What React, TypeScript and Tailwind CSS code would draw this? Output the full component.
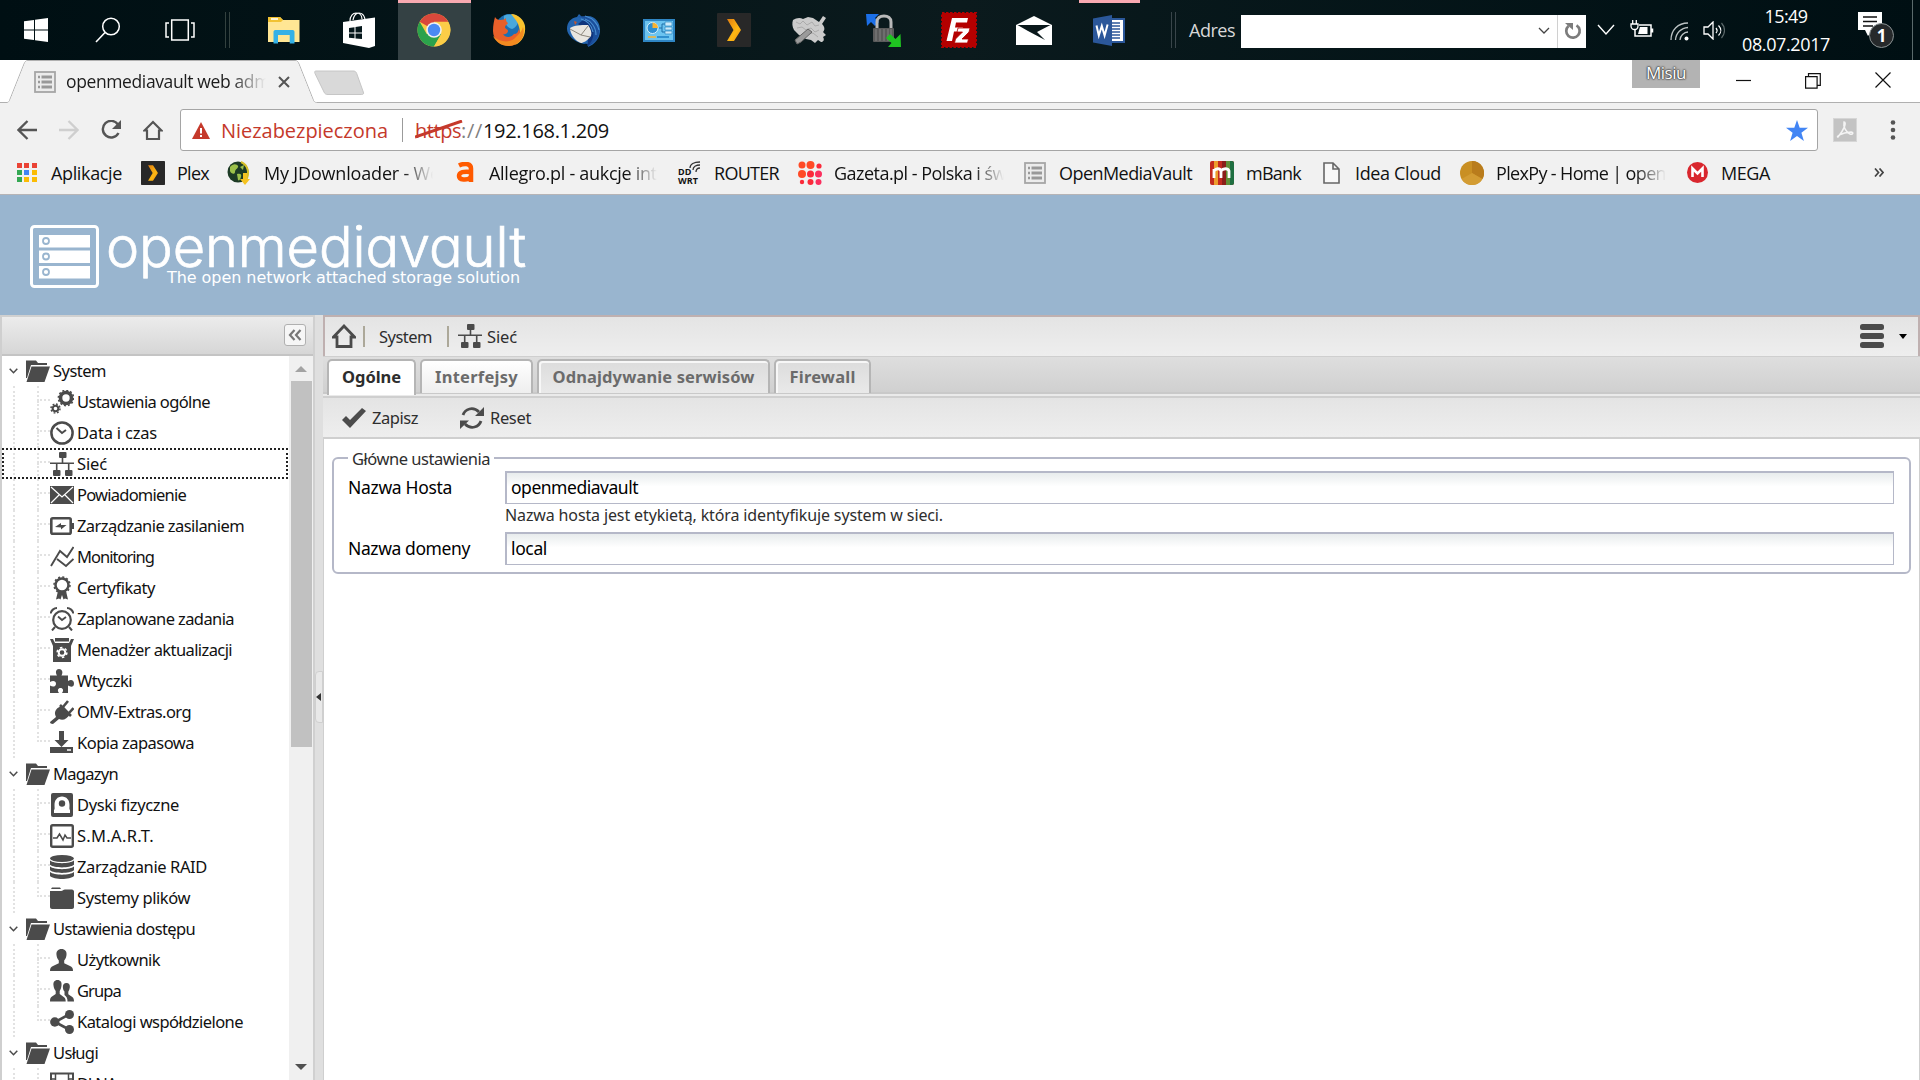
import React, { useLayoutEffect, useRef, useState } from "react";

const ui = "font-['Open_Sans','Noto_Sans',sans-serif]";
const tahoma = "font-['Noto_Sans',sans-serif]";

/* One line of text whose tracking is adjusted so that it fills a given width. */
function Fit({ w, className = "", children }: { w: number; className?: string; children: string }) {
  const ref = useRef<HTMLSpanElement>(null);
  const [spacing, setSpacing] = useState(0);
  useLayoutEffect(() => {
    const el = ref.current;
    if (!el) return;
    setSpacing((w - el.getBoundingClientRect().width) / children.length);
  }, [w, children]);
  return (
    <span className={`inline-block shrink-0 whitespace-nowrap ${className}`} style={{ width: w }}>
      <span ref={ref} style={{ letterSpacing: spacing }}>{children}</span>
    </span>
  );
}

type SvgProps = { w: number; h: number; className?: string; box?: string; children: React.ReactNode };
function Svg({ w, h, className = "", box, children }: SvgProps) {
  return (
    <svg width={w} height={h} viewBox={box ?? `0 0 ${w} ${h}`} className={`shrink-0 ${className}`} fill="none">
      {children}
    </svg>
  );
}

const G = "#4b4b4b";

/* ---------- Taskbar ---------- */
function PlexIcon({ size, className = "" }: { size: number; className?: string }) {
  return (
    <Svg w={size} h={size} box="0 0 34 34" className={className}>
      <defs>
        <linearGradient id="plexg" x1="0" y1="0" x2="1" y2="1">
          <stop offset="0" stopColor="#e07d10" /><stop offset="0.6" stopColor="#fdb813" /><stop offset="1" stopColor="#f08a10" />
        </linearGradient>
      </defs>
      <rect width="34" height="34" rx="1" fill="#282828" />
      <path d="M10 6h7l7 11-7 11h-7l6.500-11z" fill="url(#plexg)" />
    </Svg>
  );
}

function Taskbar() {
  return (
    <div className={`flex h-[60px] w-full items-center bg-linear-to-r from-[#000f13] via-[#0b1a1d] to-[#000f13] text-white ${ui}`}>
      <Svg w={24} h={24} className="ml-[24px]">
        <path fill="#fff" d="M0 3.300l10-1.400v9.600H0zM11 1.800L24 0v11.500H11zM0 12.500h10v9.600L0 20.700zM11 12.500h13V24l-13-1.800z" />
      </Svg>
      <Svg w={26} h={26} className="ml-[47px]">
        <circle cx="16" cy="9.500" r="8.300" stroke="#fff" strokeWidth="1.500" />
        <path d="M10 15.500L1 25" stroke="#fff" strokeWidth="1.600" />
      </Svg>
      <Svg w={30} h={22} className="ml-[44px]">
        <path d="M6.700 1h16.600v20H6.700zM4 4H1v14h3M26 4h3v14h-3" stroke="#fff" strokeWidth="1.500" />
      </Svg>
      <div className="ml-[30px] h-9 w-[5px] border-x border-[#33413f]" />
      <Svg w={32} h={27} className="ml-[38px]">
        <path d="M0 0h12l3 3h16.500v22H0z" fill="#ffe694" />
        <path d="M0 0h12l3 3-2 2H0z" fill="#f1c232" />
        <path d="M3 2h7" stroke="#fff" strokeWidth="1.600" />
        <path d="M5.500 26.500V15c0-1 .5-2 1.800-2h17.400c1.200 0 1.800 1 1.800 2v11.500h-4.800V18H10v8.500z" fill="#35b1e6" />
      </Svg>
      <Svg w={32} h={36} className="ml-[43px]">
        <path d="M0 10l32-4.500V34l-6 2L0 31z" fill="#fff" />
        <path d="M7 9c0-5 3-8 6-8s6 2 6 6M10 8c1-5 3-7 6-7s5 2 6 6" stroke="#fff" strokeWidth="1.200" />
        <path d="M6 16l5.500-.8v5.300H6zM12.500 15l6.500-1v6.500h-6.500zM6 21.500h5.500v4.800L6 25.700zM12.500 21.500H19V27l-6.500-.6z" fill="#06181c" />
      </Svg>
      <div className="ml-[23px] flex h-full w-[73px] items-center border-t-3 border-[#f9a9b1] bg-[#344144] pb-[3px] pl-[19px]">
        <Chrome />
      </div>
      <Svg w={34} h={34} className="ml-[21px]">
        <circle cx="18" cy="16" r="15" fill="#1b6fb4" />
        <path d="M12 3c4-3 11-1 14 3 1 4-2 9-6 10-5-1-9-7-8-13z" fill="#49a8dc" />
        <path d="M19 1c7 0 13 6 14 12 1 9-3 16-10 19 4-5 6-12 4-18-1-5-4-8-8-13z" fill="#f9c22d" />
        <path d="M3 4c1 2 3 3 5 3 3 0 5-1 6-2 0 2 0 4 2 5 0 1-3 2-3 4s3 2 3 4-3 4-5 3c2 4 8 4 11 0 3 0 4-2 5-5 4 9-2 17-10 17C9 33 1 27 1 18c0-6 1-10 2-14z" fill="#e8602a" />
        <path d="M31 14c3 9-3 18-14 19-8 0-13-4-16-10 6 6 17 8 23 1 4-4 6-6 7-10z" fill="#f28a20" />
      </Svg>
      <Svg w={34} h={34} className="ml-[41px]">
        <path d="M12 1l3 3C26 0 34 8 33 19c-1 7-5 12-12 15 1-3-1-4-4-3C7 29 0 22 0 16c0-7 4-11 10-12z" fill="#2364ae" />
        <path d="M20 4c9 3 13 13 9 21-2 4-5 7-9 8 3-9-1-16-9-22z" fill="#10357c" />
        <path d="M3 15c5-3 10-3 18-3 3 4 4 8 3 11-4 5-8 7-10 7C8 28 3 21 3 15z" fill="#e9e6e0" />
        <path d="M3 16l11 6 7-9M14 22l9 2" stroke="#8d877c" />
        <path d="M10 4c8 0 14 4 16 12 1 6 0 11-4 16 7-3 11-9 10-16C31 8 22 1 10 4z" fill="#1b4f9c" />
        <path d="M18 3c8 2 13 8 14 14M18 6c6 2 11 8 11 16M14 6c8 2 11 8 12 13" stroke="#4a8fd0" strokeWidth="1.100" />
        <path d="M7 8l3 1-2 3z" fill="#c9542b" />
      </Svg>
      <Svg w={32} h={23} className="ml-[42px]">
        <rect x="1" y="1" width="30" height="21" fill="#6cc4f0" stroke="#2f86c4" strokeWidth="2" />
        <circle cx="9.500" cy="9" r="5.500" fill="#2d8fd2" stroke="#d8f1fc" />
        <path d="M9.500 9V3.500A5.500 5.500 0 0115 9z" fill="#f8b332" />
        <path d="M16 9h3V5h3M19 9v4h3" stroke="#1c6fa8" />
        <path d="M22 3h7v4h-7zM22 8h7v3h-7zM22 12h7v3h-7z" fill="#cbeafa" stroke="#2d86c0" strokeWidth=".7" />
        <path d="M5 18h8" stroke="#f8b332" strokeWidth="1.500" /><path d="M14 18h12" stroke="#1c7fc4" strokeWidth="1.500" />
      </Svg>
      <PlexIcon size={34} className="ml-[42px]" />
      <Svg w={35} h={30} className="ml-[41px]">
        <path d="M1 5c3-2 7-3 10-1l5-2 5 1 6 4 4-6 3 2-4 6c3 3 3 6 1 8l3 3-3 2c2 3 0 5-2 5l-3-2-3 3-4-3-5-1-7-4-5-5c-2-4-2-7-1-10z" fill="#cbcbcb" />
        <path d="M4 7l4 2 3-3 4 4 5-3 3 4 4-1M5 13l5-1 4 3 5-2 4 4 4-2M12 18l5 1 4-1 5 4" stroke="#ababab" />
        <path d="M3 25l13-11 4 3L9 27l-4 2z" fill="#9b9b9b" stroke="#666" />
      </Svg>
      <Svg w={35} h={35} className="ml-[39px]">
        <path d="M0 1h13l-4 4 4 4-4 4-4-4-4 4z" fill="#1b6fe8" />
        <path d="M11 15V9c0-4 3-6 7-6s7 2 7 6v6" stroke="#b9b9b9" strokeWidth="3" />
        <rect x="7" y="15" width="21" height="14" rx="1" fill="#5b5b5b" />
        <path d="M10 16v12M14 16v12M18 16v12M22 16v12M25 16v12" stroke="#828282" />
        <path d="M35 34H22l3.500-4L20 25l4-4 5.500 5 5-5z" fill="#1fc321" />
      </Svg>
      <Svg w={36} h={36} className="ml-[40px]">
        <rect x="1" y="1" width="34" height="34" fill="#b40000" stroke="#b40000" strokeWidth="2" strokeDasharray="2.500 1.500" />
        <path d="M11 6h16l-1 4.500H15l-1 5h8l-1 4h-8L11 29H5.500z" fill="#fff" />
        <path d="M17 16h12l-1 4-7 7h6.500l-1 4H13.500l1-4 7-7H16z" fill="#fff" stroke="#b40000" strokeWidth=".8" />
      </Svg>
      <Svg w={36} h={29} className="ml-[39px]">
        <path d="M0 9L18 0l18 9v20H0z" fill="#fff" /><path d="M1.500 9h33L21 16l8 8-17-9z" fill="#0a181b" />
      </Svg>
      <div className="ml-[27px] flex h-full w-[61px] items-center border-t-3 border-[#f9a9b1] pb-[3px] pl-[14px]">
        <Svg w={32} h={31}>
          <rect x="17" y="3" width="15" height="25" fill="#2b579a" /><rect x="18" y="5" width="12" height="21" fill="#fff" />
          <path d="M18 8h9M18 11h9M18 14h9M18 17h9M18 20h9M18 23h9" stroke="#2b579a" strokeWidth="1.400" />
          <path d="M0 3.500L19 0v31L0 27.500z" fill="#2b579a" />
          <path d="M3.500 10.500l2.300 10 3-9.500 2.800 9.500 3-11" stroke="#fff" strokeWidth="2" />
        </Svg>
      </div>
      <div className="ml-[31px] h-9 w-[5px] border-x border-[#39454a]" />
      <Fit w={46} className="ml-[13px] text-[18px] text-[#d8d8d8]">Adres</Fit>
      <div className="ml-[6px] mt-[2px] flex h-[33px] w-[345px] items-center bg-white">
        <Svg w={12} h={8} className="ml-[297px]"><path d="M1 1l5 5 5-5" stroke="#444" strokeWidth="1.300" /></Svg>
        <div className="ml-[7px] h-full w-px bg-[#d0d0d0]" />
        <Svg w={18} h={18} className="ml-[6px]">
          <path d="M12.500 3.300A6.700 6.700 0 114.500 4" stroke="#7c7c7c" strokeWidth="2.700" /><path d="M1 1h8v7z" fill="#7c7c7c" />
        </Svg>
      </div>
      <Svg w={18} h={12} className="ml-[11px]"><path d="M1 1l8 9 8-9" stroke="#fff" strokeWidth="1.400" /></Svg>
      <Svg w={24} h={18} className="ml-[15px] -mt-[2px]">
        <path d="M9 5h12v11H5V10M22.500 8.500v4" stroke="#fff" strokeWidth="1.500" /><path d="M10 7h7.500v7H8z" fill="#fff" />
        <path d="M1 4h7v2c0 2-1.500 3.500-3.500 3.500S1 8 1 6zM2.700 0v4M6.300 0v4" stroke="#fff" strokeWidth="1.300" />
      </Svg>
      <Svg w={19} h={19} className="ml-[16px] mt-[2px]">
        <path d="M1 18C1 8 8 1 18 1M5.500 18C6 11 11 6 18 5.500M10 18c0-4 4-8 8-8" stroke="#bcc3c4" strokeWidth="1.300" /><circle cx="16.500" cy="16.500" r="2" fill="#fff" />
      </Svg>
      <Svg w={22} h={19} className="ml-[14px]">
        <path d="M1 6h4l5-5v17l-5-5H1z" stroke="#fff" strokeWidth="1.300" /><path d="M13 7c1.300 1.500 1.300 3.500 0 5M15.500 4.500c3 3 3 7 0 10" stroke="#fff" strokeWidth="1.200" /><path d="M18.500 2c4 4.500 4 10.500 0 15" stroke="#5c686a" strokeWidth="1.200" />
      </Svg>
      <div className="ml-[17px] flex w-[88px] flex-col items-center text-[18px] leading-[28px] -mt-px">
        <Fit w={43}>15:49</Fit>
        <Fit w={88}>08.07.2017</Fit>
      </div>
      <div className="relative ml-[28px] h-[36px] w-[36px]">
        <Svg w={24} h={24}><path d="M0 0h24v18H15l-5 6-3-6H0z" fill="#fff" /><path d="M5 5h14M5 9.500h14M5 14h10" stroke="#111" strokeWidth="1.300" /></Svg>
        <div className="absolute top-[11px] left-[11px] flex size-[25px] items-center justify-center rounded-full border border-[#8a9293] bg-[#26292b] text-[17px] font-bold">1</div>
      </div>
      <div className="ml-[18px] h-full w-px bg-[#5b6a6c]" />
    </div>
  );
}

function Chrome() {
  return (
    <Svg w={34} h={34}>
      <circle cx="17" cy="17" r="16.500" fill="#f9cc45" />
      <path d="M17 17L2.700 8.700A16.500 16.500 0 0131.300 8.700H17z" fill="#d9483b" />
      <path d="M2.700 8.700A16.500 16.500 0 0017 33.500l7.300-12.500-7.300-4-7.300 4z" fill="#2ba24c" />
      <path d="M17 33.500A16.500 16.500 0 0031.300 9H17l7.300 12z" fill="#fbcd47" />
      <circle cx="17" cy="17" r="7.800" fill="#f1f1f1" /><circle cx="17" cy="17" r="6.200" fill="#4a8af4" />
    </Svg>
  );
}

/* ---------- Browser chrome ---------- */
function OmvFav() {
  return (
    <Svg w={22} h={22}>
      <rect x="1" y="1" width="20" height="20" fill="#ececec" stroke="#a6a6a6" strokeWidth="1.800" />
      <path d="M4 6h2M4 11h2M4 16h2" stroke="#999" strokeWidth="2.400" /><path d="M7.500 6H18M7.500 11H18M7.500 16H18" stroke="#999" strokeWidth="2.800" />
    </Svg>
  );
}

function TabStrip() {
  return (
    <div className={`relative flex h-[43px] w-full items-start bg-white ${ui}`}>
      <Svg w={1920} h={43} className="absolute top-0 left-0">
        <path d="M0 42.500H7c2 0 2-1 2.500-2L24 4c1-2.500 2-3.500 4-3.500h267c2 0 3 1 4 3.500l14.500 36.500c.5 1 1 2 3 2H1920" fill="none" stroke="#b0b0b0" />
        <path d="M7 43c2-.5 2.300-1.300 3-2.500L24.500 4C25.300 2 26 1 28 1h267c2 0 2.700 1 3.500 3L313 40.500c.7 1.500 1 2 3 2.500z" fill="#f1f1f1" />
        <path d="M316 11h37c2 0 3 .6 3.700 2.500l6.600 18.500c.8 2-.2 2.500-2 2.500H328c-2 0-3.200-.6-4-2.500L315 13.500c-.6-1.600-.5-2.500 1-2.500z" fill="#d9d9d9" stroke="#c6c6c6" />
      </Svg>
      <div className="relative mt-[11px] ml-[34px]"><OmvFav /></div>
      <div className="relative mt-[7px] ml-[10px] w-[200px] overflow-hidden text-[17.500px] leading-[28px] text-[#1c1c1c] mask-[linear-gradient(to_right,black_165px,transparent_200px)]">
        <Fit w={208}>openmediavault web admi</Fit>
      </div>
      <Svg w={12} h={12} className="relative mt-[16px] ml-[12px]"><path d="M1 1l10 10M11 1L1 11" stroke="#555" strokeWidth="2" /></Svg>
      <div className="mt-0 ml-[1342px] flex h-[28px] w-[68px] justify-center bg-[#b3b3b3] text-[17px] leading-[26px] text-white [text-shadow:0_0_2px_#333,0_0_2px_#333,0_0_1px_#333]"><Fit w={40}>Misiu</Fit></div>
      <Svg w={16} h={16} className="mt-[13px] ml-[36px]"><path d="M0 7.500h15" stroke="#111" strokeWidth="1.200" /></Svg>
      <Svg w={16} h={16} className="mt-[13px] ml-[53px]"><path d="M.6 3.600h11.500v11.500H.6zM3.500 3.500V.6h11.800v11.700h-3" stroke="#111" strokeWidth="1.200" /></Svg>
      <Svg w={16} h={16} className="mt-[12px] ml-[54px]"><path d="M.5.5l15 15M15.500.5l-15 15" stroke="#111" strokeWidth="1.200" /></Svg>
    </div>
  );
}

function AddressBar() {
  return (
    <div className={`flex h-[54px] w-full items-center bg-[#f1f1f1] ${ui}`}>
      <Svg w={20} h={20} className="ml-[17px]"><path d="M20 10H2M10.500 1L1.500 10l9 9" stroke="#555" strokeWidth="2.300" /></Svg>
      <Svg w={20} h={20} className="ml-[22px]"><path d="M0 10h18M9.500 1l9 9-9 9" stroke="#cfcfcf" strokeWidth="2.300" /></Svg>
      <Svg w={22} h={20} className="ml-[21px]"><path d="M18 4.500A8.300 8.300 0 1018.500 13" stroke="#555" strokeWidth="2.400" /><path d="M21 0v9h-9z" fill="#555" /></Svg>
      <Svg w={20} h={20} className="ml-[21px]"><path d="M1.500 10.500L10 2l8.500 8.500H16V19H4v-8.500z" stroke="#555" strokeWidth="2.200" /></Svg>
      <div className="ml-[17px] flex h-[42px] w-[1638px] items-center rounded-[3px] border border-[#a5a5a5] bg-white text-[20px]">
        <Svg w={18} h={17} className="ml-[11px] mt-[1px]"><path d="M9 0l9 17H0z" fill="#c5392b" /><path d="M9 6v5.500M9 13v2" stroke="#fff" strokeWidth="2" /></Svg>
        <Fit w={167} className="mt-px ml-[11px] text-[#c5392b]">Niezabezpieczona</Fit>
        <div className="ml-[14px] h-[24px] w-px bg-[#9b9b9b]" />
        <div className="relative mt-px ml-[12px]">
          <Fit w={46} className="text-[#c5392b]">https</Fit>
          <Svg w={50} h={20} className="absolute top-[4px] left-0"><path d="M0 17L47 1" stroke="#c5392b" strokeWidth="3" /></Svg>
        </div>
        <Fit w={22} className="mt-px text-[#808080]">://</Fit>
        <Fit w={126} className="mt-px text-[#111]">192.168.1.209</Fit>
        <Svg w={22} h={21} className="ml-[1177px]"><path d="M11 0l2.700 7.800H22l-6.600 5 2.500 8.200-6.900-5-6.900 5 2.500-8.200L0 7.800h8.300z" fill="#4285f4" /></Svg>
      </div>
      <Svg w={24} h={24} className="ml-[15px]"><rect x=".5" y=".5" width="23" height="23" fill="#c3c3c3" stroke="#d6d6d6" /><path d="M11 4c3 0 0 8-6 15-2 0 2-4 13-5 3 0 2 3-1 2-4-2-7-7-6-12z" stroke="#f4f4f4" strokeWidth="1.500" /></Svg>
      <Svg w={6} h={20} className="ml-[33px]"><circle cx="3" cy="2.500" r="2.300" fill="#555" /><circle cx="3" cy="10" r="2.300" fill="#555" /><circle cx="3" cy="17.500" r="2.300" fill="#555" /></Svg>
    </div>
  );
}

function Faded({ w, full, children }: { w: number; full: number; children: string }) {
  return (
    <div className="shrink-0 overflow-hidden mask-[linear-gradient(to_right,black_82%,transparent_100%)]" style={{ width: w }}>
      <Fit w={full}>{children}</Fit>
    </div>
  );
}

function Bookmarks() {
  const apps = ["#ea4335", "#ea4335", "#ea4335", "#34a853", "#4285f4", "#fbbc05", "#34a853", "#fbbc05", "#fbbc05"];
  return (
    <div className={`flex h-[38px] w-full items-center border-b border-[#b6b4b6] bg-[#f1f1f1] pb-[6px] text-[18px] leading-[30px] text-[#111] ${ui}`}>
      <div className="ml-[17px] grid w-[20px] grid-cols-3 gap-[2px]">
        {apps.map((c, i) => <i key={i} className="h-[5px] w-[5px]" style={{ background: c }} />)}
      </div>
      <Fit w={71} className="ml-[14px]">Aplikacje</Fit>
      <PlexIcon size={24} className="ml-[19px]" />
      <Fit w={32} className="ml-[12px]">Plex</Fit>
      <Svg w={24} h={24} className="ml-[18px]">
        <circle cx="11" cy="11" r="10.500" fill="#1d3b25" /><path d="M3 6c3-4 7-3 8-1s-3 3-3 6-4 2-5-1zM10 13c3-1 5 0 4 3s-2 4-3 3zM13 6l4-2-1 5z" fill="#9cc14a" />
        <path d="M14 1c7 3 9 11 5 18" stroke="#d7bf28" strokeWidth="2" /><path d="M16 12h4v6h3l-5 6-5-6h3z" fill="#f5c321" />
      </Svg>
      <div className="ml-[13px]"><Faded w={169} full={176}>My JDownloader - We</Faded></div>
      <Svg w={19} h={21} className="ml-[23px]"><path d="M3 3.500c4-2 12-3 12 3V20M15 10C8 9 3 10 3 14s8 5 12 1" stroke="#ff5a00" strokeWidth="4.500" /></Svg>
      <div className="ml-[14px]"><Faded w={168} full={168}>Allegro.pl - aukcje int</Faded></div>
      <div className="relative ml-[21px] flex h-[24px] w-[22px] flex-col justify-end text-[9px] font-bold">
        <span className="h-[8px] leading-[8px]">DD</span><span className="h-[9px] leading-[9px]">WRT</span>
        <Svg w={11} h={11} className="absolute top-0 right-0"><path d="M1 7C1 3 5 1 11 1M4 9c0-3 3-5 7-5M7 11c0-2 1-4 4-4" stroke="#333" strokeWidth="1.300" /></Svg>
      </div>
      <Fit w={65} className="ml-[14px]">ROUTER</Fit>
      <Svg w={24} h={24} className="ml-[19px]">
        <g fill="#ff4a26"><circle cx="4" cy="4" r="3.500" /><circle cx="12.500" cy="4" r="4" /><circle cx="4" cy="13" r="4" /></g>
        <g fill="#fb2a3a"><circle cx="21" cy="5" r="2.600" /><circle cx="12.500" cy="13" r="3.500" /><circle cx="4" cy="21" r="2.200" /><circle cx="12.500" cy="21" r="3" /></g>
        <g fill="#fb2f5e"><circle cx="20.500" cy="13" r="3.500" /><circle cx="20.500" cy="21" r="3" /></g>
      </Svg>
      <div className="ml-[12px]"><Faded w={170} full={172}>Gazeta.pl - Polska i św</Faded></div>
      <div className="ml-[20px]"><OmvFav /></div>
      <Fit w={133} className="ml-[13px]">OpenMediaVault</Fit>
      <Svg w={24} h={24} className="ml-[18px]">
        <rect width="24" height="24" rx="2" fill="#c22a1f" /><path d="M4 0h4v24H4z" fill="#ed9d2d" /><path d="M12 0h4v24h-4z" fill="#8a1f19" /><path d="M16 0h4v24h-4z" fill="#5f8f38" /><path d="M20 0h2a2 2 0 012 2v20a2 2 0 01-2 2h-2z" fill="#1f6f41" />
        <path d="M4 17V8M4 10c2-3 6-3 7 0v7M11 10c2-3 7-3 8 0v7" stroke="#fff" strokeWidth="2.800" />
      </Svg>
      <Fit w={55} className="ml-[12px]">mBank</Fit>
      <Svg w={17} h={22} className="ml-[22px]"><path d="M1 1h9l6 6v14H1zM10 1v6h6" stroke="#666" strokeWidth="1.600" fill="#f8f8f8" /></Svg>
      <Fit w={86} className="ml-[15px]">Idea Cloud</Fit>
      <Svg w={24} h={24} className="ml-[19px]"><circle cx="12" cy="12" r="12" fill="#c98f23" /><path d="M12 12V0a12 12 0 0110.400 18z" fill="#b97c1c" /><path d="M12 12L1.600 18A12 12 0 0022.400 18z" fill="#d39c33" /></Svg>
      <div className="ml-[12px]"><Faded w={170} full={170}>PlexPy - Home | open</Faded></div>
      <Svg w={21} h={21} className="ml-[21px]"><circle cx="10.500" cy="10.500" r="10.500" fill="#d9272e" /><path d="M5.500 15V6.500l5 5 5-5V15" stroke="#fff" strokeWidth="2.600" /></Svg>
      <Fit w={49} className="ml-[13px]">MEGA</Fit>
      <Svg w={10} h={9} className="ml-[104px]"><path d="M1 .5l3.500 4L1 8.500M5.500.5l3.500 4-3.500 4" stroke="#444" strokeWidth="1.700" /></Svg>
    </div>
  );
}

/* ---------- OpenMediaVault ---------- */
function Header() {
  return (
    <div className="flex h-[120px] w-full items-start bg-[#99b5cf] text-white">
      <Svg w={69} h={63} className="mt-[30px] ml-[30px]">
        <rect x="1.500" y="1.500" width="66" height="60" rx="3" stroke="#fff" strokeWidth="3" />
        <path d="M9 10h51v12.500H9zM9 25.500h51V38H9zM9 41h51v12.500H9z" fill="#fff" />
        <g stroke="#99b5cf" strokeWidth="1.800"><circle cx="16" cy="16" r="3" /><circle cx="16" cy="31.500" r="3" /><circle cx="16" cy="47" r="3" /></g>
      </Svg>
      <div className="mt-[22px] ml-[7px] flex flex-col">
        <Fit w={420} className="h-[51px] font-['Inter',sans-serif] text-[56px] leading-[60px] font-light [-webkit-text-stroke:0.7px_white] [font-feature-settings:'cv11']">openmediavault</Fit>
        <Fit w={353} className="ml-[61px] font-['DejaVu_Sans',sans-serif] text-[16px] leading-[20px]">The open network attached storage solution</Fit>
      </div>
    </div>
  );
}

const icons: Record<string, React.ReactNode> = {
  gears: <><circle cx="16" cy="8" r="5.500" stroke={G} strokeWidth="3.600" /><circle cx="16" cy="8" r="7.600" stroke={G} strokeWidth="1.600" strokeDasharray="2 1.980" /><circle cx="5.500" cy="18.500" r="2.800" stroke={G} strokeWidth="2" /><circle cx="5.500" cy="18.500" r="4.500" stroke={G} strokeWidth="1.500" strokeDasharray="1.800 1.730" /></>,
  clock: <><circle cx="12" cy="12" r="10.600" stroke={G} strokeWidth="2.500" /><path d="M6.500 7l5.500 5 4-3" stroke={G} strokeWidth="2" /></>,
  net: <><rect x="9" y="0" width="7.500" height="6" rx="1" fill={G} /><rect x="3" y="18" width="7.500" height="6" rx="1" fill={G} /><rect x="15" y="18" width="7.500" height="6" rx="1" fill={G} /><path d="M12.500 5v6M0 11.300h24M6.700 11v8M18.700 11v8" stroke={G} strokeWidth="1.600" /></>,
  mail: <><rect y="3" width="24" height="18" fill={G} /><path d="M1 4l11 10L23 4M1 20l8-8M23 20l-8-8" stroke="#fff" strokeWidth="1.200" /></>,
  power: <><rect x="1.300" y="4.300" width="19.400" height="15.400" rx="1.500" stroke={G} strokeWidth="2.600" /><rect x="21" y="9" width="3" height="6" fill={G} /><path d="M5 13l6-4v2h5.500L11 15.500v-2z" fill={G} /></>,
  chart: <path d="M1 21L10 6l7 6 6.500-10M7 14l9 7 7.500-7" stroke={G} strokeWidth="1.900" />,
  cert: <><circle cx="12" cy="9" r="6.500" stroke={G} strokeWidth="2.500" /><circle cx="12" cy="9" r="8" stroke={G} strokeWidth="1.500" strokeDasharray="2 2.190" /><path d="M8 15L6 23.500l3-1 1.500 1L12 19l1.500 4.500 1.500-1 3 1L16 15" fill={G} /></>,
  alarm: <><circle cx="12" cy="13" r="8.800" stroke={G} strokeWidth="2.200" /><path d="M8 9.500l4 3.500 4-3" stroke={G} strokeWidth="1.800" /><path d="M.7 6.500C1 3.500 4 1 7 1M23.300 6.500C23 3.500 20 1 17 1M5 20l-3 3.500M19 20l3 3.500" stroke={G} strokeWidth="2" /></>,
  update: <><path d="M5 0h14v3.500H5z" fill={G} /><path d="M0 1h3l2 4h14l2-4h3l-3 7v16H3V8z" fill={G} /><circle cx="12" cy="14.500" r="3.300" stroke="#fff" strokeWidth="2" /><circle cx="12" cy="14.500" r="4.900" stroke="#fff" strokeWidth="1.500" strokeDasharray="2.500 2.600" /></>,
  puzzle: <path d="M0 6.500h7C5 3 6 0 9 0s4.500 3 2.500 6.500h6.500V12c3-2 6-1 6 2.500s-3 4-6 2V24h-6c2-2.500 1-5-1.500-5S7 21.500 9 24H0v-7.500c3 2 6 1 6-1.800S3 11 0 13z" fill={G} />,
  plug: <><path d="M0 22l6-5c-3-6 1-10 7-11l7 8c-3 5-7 7-11 5l-6 5c-2 0-3-1-3-2z" fill={G} /><path d="M13 7l5-6M19 13l4.500-5M10 5l11 11" stroke={G} strokeWidth="2.600" /></>,
  save: <><path d="M9 0h5v9h4.500l-7 7-7-7H9z" fill={G} /><path d="M0 16h23v6H0z" fill={G} /><path d="M17 19h4" stroke="#fff" strokeWidth="1.500" /></>,
  disk: <><rect x="1" width="22" height="24" rx="2" fill={G} /><path d="M4 20v-3c1-1 .5-2 .5-5 0-5 3-8.500 7.500-8.500s7.500 3.500 7.500 8.500c0 3-.5 4 .5 5v3z" fill="#fff" /><circle cx="12" cy="10.500" r="3.200" fill={G} /></>,
  smart: <><rect x="1.200" y="1.200" width="21.600" height="21.600" rx="1.500" stroke={G} strokeWidth="2.400" /><path d="M3 14h4l2.500-4 3.500 6 2-5 2 3h4" stroke={G} strokeWidth="1.500" /></>,
  raid: <><ellipse cx="12" cy="3.500" rx="12" ry="3.500" fill={G} /><path d="M0 5.500c4 3.500 20 3.500 24 0v4.300c-4 3.500-20 3.500-24 0zM0 11.500c4 3.500 20 3.500 24 0v3.800c-4 3.500-20 3.500-24 0zM0 17c4 3.500 20 3.500 24 0v4c-4 4-20 4-24 0z" fill={G} /></>,
  fs: <path d="M1 3l1-1.500h8L11 3zM0 5h11c2 0 2-1.500 4-1.500h7c1 0 2 1 2 2V21c0 1-1 2-2 2H2c-1 0-2-1-2-2z" fill={G} />,
  user: <path d="M11.500 1C15 1 17 3.500 16.500 7c-.2 2-1 4-2.300 5.500v2.700L20 18c2 1 3 2 3 5H0c0-3 1-4 3-5l5.800-2.800v-2.700C7.500 11 6.700 9 6.500 7 6 3.500 8 1 11.500 1z" fill={G} />,
  group: <><path d="M7.500 1c3 0 4.500 2.300 4 5.500-.2 2-.8 4-1.800 5.500v3l4 3c1.500 1 2 2 2 4.500H0c0-3 .5-4 2-5l3.700-2.500v-3C4.500 10.500 3.700 8.500 3.500 6.500 3 3.300 4.500 1 7.500 1z" fill={G} /><path d="M16.500 4c2.500 0 3.800 2 3.300 4.500-.2 1.500-.7 3-1.500 4.200v2.600l4 2.700c1.200 1 1.700 2 1.700 4.500h-6.500c0-3.500-1-5-3-6.500v-3.500c-1-1-1.500-2.500-1.600-4C12.500 6 14 4 16.500 4z" fill={G} /></>,
  share: <><circle cx="4.800" cy="12" r="4.700" fill={G} /><circle cx="19.500" cy="4.500" r="4.500" fill={G} /><circle cx="19.500" cy="19.500" r="4.500" fill={G} /><path d="M19 4.500L5 12l14 7.500" stroke={G} strokeWidth="2.600" /></>,
  film: <><rect x="1" y="1.500" width="22" height="21" stroke={G} strokeWidth="2" /><path d="M5.500 1v22M18.500 1v22M1 7h4M19 7h4" stroke={G} strokeWidth="1.500" /></>,
};

type Row = { t: string; w: number; icon?: string; last?: boolean; sel?: boolean };
const rows: Row[] = [
  { t: "System", w: 53 },
  { t: "Ustawienia ogólne", w: 133, icon: "gears" },
  { t: "Data i czas", w: 80, icon: "clock" },
  { t: "Sieć", w: 30, icon: "net", sel: true },
  { t: "Powiadomienie", w: 109, icon: "mail" },
  { t: "Zarządzanie zasilaniem", w: 167, icon: "power" },
  { t: "Monitoring", w: 77, icon: "chart" },
  { t: "Certyfikaty", w: 78, icon: "cert" },
  { t: "Zaplanowane zadania", w: 157, icon: "alarm" },
  { t: "Menadżer aktualizacji", w: 155, icon: "update" },
  { t: "Wtyczki", w: 55, icon: "puzzle" },
  { t: "OMV-Extras.org", w: 114, icon: "plug" },
  { t: "Kopia zapasowa", w: 117, icon: "save", last: true },
  { t: "Magazyn", w: 65 },
  { t: "Dyski fizyczne", w: 102, icon: "disk" },
  { t: "S.M.A.R.T.", w: 77, icon: "smart" },
  { t: "Zarządzanie RAID", w: 130, icon: "raid" },
  { t: "Systemy plików", w: 113, icon: "fs", last: true },
  { t: "Ustawienia dostępu", w: 142 },
  { t: "Użytkownik", w: 83, icon: "user" },
  { t: "Grupa", w: 44, icon: "group" },
  { t: "Katalogi współdzielone", w: 166, icon: "share", last: true },
  { t: "Usługi", w: 45 },
  { t: "DLNA", w: 39, icon: "film" },
];

function TreeRow({ r }: { r: Row }) {
  const child = !!r.icon;
  return (
    <div className={`flex h-[31px] shrink-0 items-center ${r.sel ? "outline-2 -outline-offset-2 outline-dotted outline-[#222]" : ""}`}>
      {child ? (
        <>
          <div className="ml-[11px] h-full border-l-2 border-dotted border-[#e2e2e2]" />
          <div className="ml-[22px] flex h-full w-[13px] flex-col">
            <div className="h-[15px] border-b-2 border-l-2 border-dotted border-[#e2e2e2]" />
            <div className={`flex-1 ${r.last ? "" : "border-l-2 border-dotted border-[#e2e2e2]"}`} />
          </div>
          <Svg w={24} h={24}>{icons[r.icon!]}</Svg>
        </>
      ) : (
        <>
          <Svg w={9} h={6} className="ml-[7px]"><path d="M.7.7l3.800 4 3.800-4" stroke={G} strokeWidth="1.500" /></Svg>
          <Svg w={24} h={24} className="ml-[8px]"><path d="M0 1.500h10l2 2.500h9v2H5L1 19H0z" fill={G} /><path d="M5.500 7.500H24L18.500 23H.5z" fill={G} /></Svg>
        </>
      )}
      <Fit w={r.w} className={`mt-px ml-[3px] text-[16.500px] leading-[30px] text-[#111] ${tahoma}`}>{r.t}</Fit>
    </div>
  );
}

function Sidebar() {
  return (
    <div className="flex h-full w-[315px] shrink-0 flex-col border-x-2 border-[#cfcfcf] border-r-[#d0d0d0]">
      <div className="flex h-[41px] shrink-0 items-center justify-end border-t-2 border-b-2 border-[#d0d0d0] border-b-[#c4c4c4] bg-linear-to-b from-[#ececec] to-[#d6d6d6] pr-[7px] pb-[2px]">
        <div className="flex h-[22px] w-[22px] items-center justify-center rounded-[3px] border border-[#b0b0b0] bg-[#f6f6f6]">
          <Svg w={14} h={12}><path d="M6.500 1L2 6l4.500 5M12.500 1L8 6l4.500 5" stroke="#777" strokeWidth="2.200" /></Svg>
        </div>
      </div>
      <div className="flex min-h-0 flex-1 bg-white">
        <div className="-mt-px flex w-[287px] flex-col overflow-hidden pr-[1px]">
          {rows.map((r) => <TreeRow key={r.t} r={r} />)}
        </div>
        <div className="flex flex-1 flex-col items-center bg-[#f0f0f0]">
          <Svg w={12} h={6} className="mt-[10px]"><path d="M0 6l6-6 6 6z" fill="#a3a3a3" /></Svg>
          <div className="mt-[9px] h-[366px] w-[21px] bg-[#c1c1c1]" />
          <Svg w={12} h={6} className="mt-auto mb-[10px]"><path d="M0 0l6 6 6-6z" fill="#505050" /></Svg>
        </div>
      </div>
    </div>
  );
}

function Tab({ w, children, kind, className = "" }: { w: number; children: string; kind: "active" | "hover" | "plain"; className?: string }) {
  const look = kind === "active" ? "h-[36px] pb-px bg-white text-[#2d2d2d]" : kind === "hover" ? "h-[34px] bg-linear-to-b from-white to-[#eee] text-[#6b6b6b]" : "h-[34px] bg-linear-to-b from-[#dcdcdc] to-[#e9e9e9] text-[#6b6b6b] shadow-[inset_1px_1px_0_1px_#f7f7f7]";
  return (
    <div className={`flex items-center justify-center rounded-t-[5px] border-2 border-b-0 border-[#b5b5b5] text-[16.500px] font-bold ${tahoma} ${look} ${className}`}>
      <Fit w={w}>{children}</Fit>
    </div>
  );
}

function Field({ label, lw, value, vw }: { label: string; lw: number; value: string; vw: number }) {
  return (
    <div className="flex items-center text-black">
      <div className="w-[157px] text-[17.500px]"><Fit w={lw}>{label}</Fit></div>
      <div className="flex h-[33px] w-[1389px] items-center border-t-2 border-r border-b-[1.500px] border-l-2 border-[#b5b8c8] bg-linear-to-b from-[#e8eced] via-white via-45% to-white pb-px pl-[4px] text-[17.500px]"><Fit w={vw}>{value}</Fit></div>
    </div>
  );
}

function Main() {
  return (
    <div className={`flex h-full min-w-0 flex-1 flex-col text-[16px] text-[#2e2e2e] ${tahoma}`}>
      <div className="flex h-[41px] shrink-0 items-center border-2 border-b-0 border-[#bfb0b0] bg-linear-to-b from-[#e4e4e4] to-[#eee] pb-px">
        <Svg w={24} h={24} className="ml-[7px]"><path d="M1.500 13L12 2l10.500 11H19v9.500H5V13z" stroke={G} strokeWidth="2.800" /></Svg>
        <div className="ml-[7px] h-[21px] w-[2px] bg-[#aca899]" />
        <Fit w={53} className="mt-[2px] ml-[14px] text-[16.500px]">System</Fit>
        <div className="ml-[15px] h-[21px] w-[2px] bg-[#aca899]" />
        <Svg w={24} h={24} className="ml-[9px]">{icons.net}</Svg>
        <Fit w={30} className="mt-[2px] ml-[5px] text-[16.500px]">Sieć</Fit>
        <Svg w={24} h={24} className="ml-auto"><rect width="24" height="6" rx="2.500" fill={G} /><rect y="9" width="24" height="6" rx="2.500" fill={G} /><rect y="18" width="24" height="6" rx="2.500" fill={G} /></Svg>
        <Svg w={8} h={5} className="mr-[11px] ml-[15px]"><path d="M0 0h8L4 5z" fill="#000" /></Svg>
      </div>
      <div className="flex h-[42px] shrink-0 items-start border-t border-b-2 border-[#cfcfcf] bg-[linear-gradient(#dedede,#d0d0d0_35px,#c9c9c9_35px,#c9c9c9_37px,#eaeaea_37px)] pt-[2px] pl-[4px]">
        <Tab w={59} kind="active" className="w-[89px]">Ogólne</Tab>
        <Tab w={83} kind="hover" className="ml-[4px] w-[113px]">Interfejsy</Tab>
        <Tab w={202} kind="plain" className="ml-[4px] w-[233px]">Odnajdywanie serwisów</Tab>
        <Tab w={66} kind="plain" className="ml-[4px] w-[97px]">Firewall</Tab>
      </div>
      <div className="flex h-[41px] shrink-0 items-center border-b-2 border-[#cfcfcf] bg-linear-to-b from-[#e4e4e4] to-[#eee]">
        <Svg w={24} h={20} className="ml-[19px]"><path d="M0 12l4-4 4 4L20 0l4 3L8 20z" fill={G} /></Svg>
        <Fit w={46} className="mt-[2px] ml-[6px] text-[16.500px]">Zapisz</Fit>
        <Svg w={24} h={24} className="ml-[42px]"><path d="M3 9C5 3 13 0 19 6M21 15c-2 6-10 9-16 3" stroke={G} strokeWidth="2.800" /><path d="M24 1v9h-9zM0 23v-8.500h9z" fill={G} /></Svg>
        <Fit w={41} className="mt-[2px] ml-[6px] text-[16.500px]">Reset</Fit>
      </div>
      <div className="flex-1 border-r border-l border-[#cfcfcf] bg-white pt-[7px] pl-[8px]">
        <fieldset className="h-[128px] w-[1579px] rounded-[6px] border-2 border-[#b5b8c8] pl-[14px]">
          <legend className="ml-0 h-[24px] px-[4px] leading-[25px] text-[16.500px]"><Fit w={138}>Główne ustawienia</Fit></legend>
          <div className="mt-[1px]"><Field label="Nazwa Hosta" lw={104} value="openmediavault" vw={127} /></div>
          <div className="flex h-[28px] pt-0 pl-[157px] text-[16px] leading-[23px]"><Fit w={438}>Nazwa hosta jest etykietą, która identyfikuje system w sieci.</Fit></div>
          <Field label="Nazwa domeny" lw={122} value="local" vw={36} />
        </fieldset>
      </div>
    </div>
  );
}

export default function App() {
  return (
    <div className="flex h-[1080px] w-[1920px] flex-col overflow-hidden bg-white">
      <Taskbar />
      <TabStrip />
      <AddressBar />
      <Bookmarks />
      <Header />
      <div className="flex min-h-0 flex-1 bg-[#dfdfdf]">
        <Sidebar />
        <div className="flex h-full w-[8px] shrink-0 flex-col bg-[#dfdfdf]">
          <div className="mt-[356px] flex h-[52px] w-[8px] items-center rounded-l-[4px] border border-[#cfcfcf] bg-[#e8e8e8]">
            <Svg w={5} h={8}><path d="M5 0v8L0 4z" fill="#333" /></Svg>
          </div>
        </div>
        <Main />
      </div>
    </div>
  );
}
